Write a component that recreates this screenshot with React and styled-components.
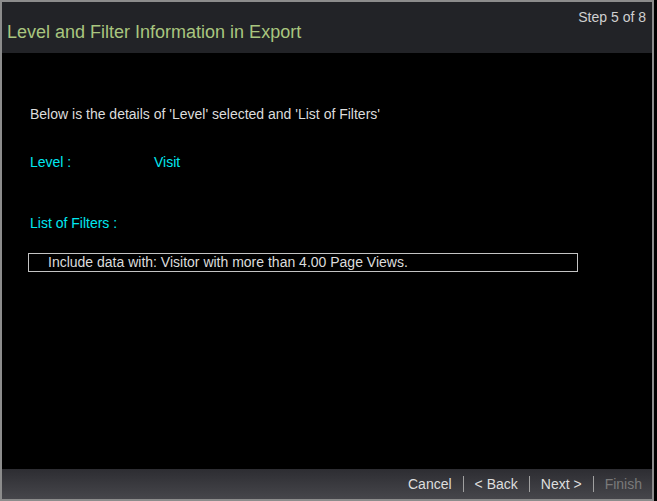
import React from 'react';
import styled, { createGlobalStyle } from 'styled-components';

const GlobalStyle = createGlobalStyle`
    html, body {
        margin: 0;
        padding: 0;
        background: #000;
    }
    * {
        font-family: 'Liberation Sans', Arial, sans-serif;
    }
`;

const Frame = styled.div`
    width: 654px;
    height: 501px;
    box-sizing: border-box;
    border: 2px solid #8c8c8c;
    display: flex;
    flex-direction: column;
    background: #000;
`;

const Header = styled.div`
    height: 51px;
    background: #222327;
    display: flex;
    justify-content: space-between;
    align-items: flex-start;
    padding: 0 6px 0 5px;
`;

const Title = styled.h1`
    margin: 19px 0 0;
    font-size: 18px;
    font-weight: normal;
    color: #a9c67f;
    line-height: 22px;
`;

const StepLabel = styled.span`
    margin-top: 7px;
    font-size: 14px;
    color: #d0d0d0;
    line-height: 16px;
`;

const Content = styled.div`
    flex: 1;
    padding: 53px 0 0 28px;
    display: flex;
    flex-direction: column;
`;

const Intro = styled.p`
    margin: 0;
    font-size: 14px;
    line-height: 16px;
    color: #dcdcdc;
`;

const LevelRow = styled.div`
    display: flex;
    margin-top: 32px;
    font-size: 14px;
    line-height: 16px;
    color: #00e8f0;

    & > span:first-child {
        width: 124px;
    }
`;

const FilterLabel = styled.div`
    margin-top: 45px;
    font-size: 14px;
    line-height: 16px;
    color: #00e8f0;
`;

const FilterBox = styled.div`
    margin-top: 22px;
    margin-left: -2px;
    width: 550px;
    height: 19px;
    box-sizing: border-box;
    border: 1px solid #c4c4c4;
    padding-left: 19px;
    font-size: 14px;
    line-height: 17px;
    color: #dcdcdc;
`;

const Footer = styled.div`
    height: 30px;
    background: linear-gradient(#2d2d32, #46464b);
    display: flex;
    justify-content: flex-end;
    align-items: center;
    padding-right: 10px;
`;

const FooterButton = styled.span`
    font-size: 14px;
    color: ${props => props.disabled ? '#7a7a7a' : '#dedede'};
    padding: 0 11px;
    line-height: 16px;
    cursor: pointer;

    &:last-child {
        padding-right: 0;
    }
`;

const Divider = styled.span`
    width: 1px;
    height: 16px;
    background: #a0a0a0;
`;

const App = () => {
    return (
        <>
            <GlobalStyle />
            <Frame>
                <Header>
                    <Title>Level and Filter Information in Export</Title>
                    <StepLabel>Step 5 of 8</StepLabel>
                </Header>
                <Content>
                    <Intro>Below is the details of 'Level' selected and 'List of Filters'</Intro>
                    <LevelRow>
                        <span>Level :</span>
                        <span>Visit</span>
                    </LevelRow>
                    <FilterLabel>List of Filters :</FilterLabel>
                    <FilterBox>Include data with: Visitor with more than 4.00 Page Views.</FilterBox>
                </Content>
                <Footer>
                    <FooterButton>Cancel</FooterButton>
                    <Divider />
                    <FooterButton>&lt; Back</FooterButton>
                    <Divider />
                    <FooterButton>Next &gt;</FooterButton>
                    <Divider />
                    <FooterButton disabled>Finish</FooterButton>
                </Footer>
            </Frame>
        </>
    );
};

export default App;
